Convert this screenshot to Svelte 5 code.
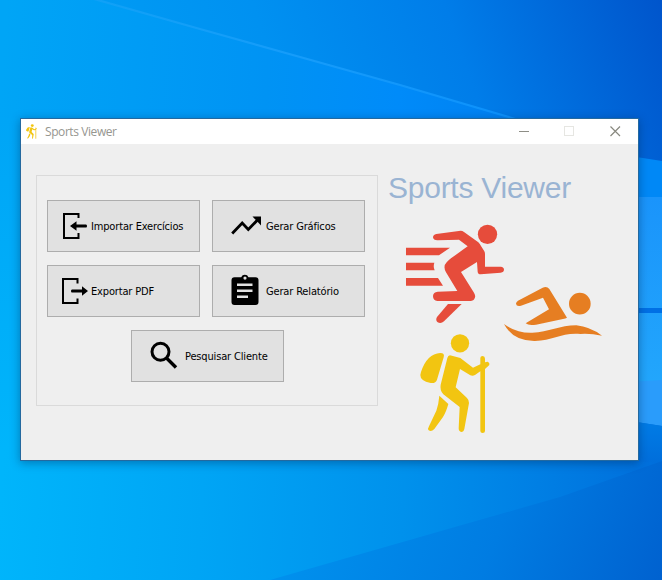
<script>
  const title = 'Sports Viewer';
  const rows = [
    [
      { icon: 'import', label: 'Importar Exercícios' },
      { icon: 'chart', label: 'Gerar Gráficos' }
    ],
    [
      { icon: 'export', label: 'Exportar PDF' },
      { icon: 'report', label: 'Gerar Relatório' }
    ],
    [{ icon: 'search', label: 'Pesquisar Cliente' }]
  ];
</script>

<div class="desktop">
  <svg class="wallpaper" viewBox="0 0 662 580" preserveAspectRatio="none" aria-hidden="true">
    <defs>
      <linearGradient id="base" gradientUnits="userSpaceOnUse" x1="0" y1="500" x2="670" y2="540">
        <stop offset="0" stop-color="#00b5fb" />
        <stop offset=".3" stop-color="#00a5f5" />
        <stop offset=".6" stop-color="#0091ec" />
        <stop offset=".8" stop-color="#007fe4" />
        <stop offset="1" stop-color="#006cda" />
      </linearGradient>
      <linearGradient id="sky" gradientUnits="userSpaceOnUse" x1="90" y1="180" x2="660" y2="-20">
        <stop offset="0" stop-color="#009ff5" />
        <stop offset=".35" stop-color="#0091f1" />
        <stop offset=".65" stop-color="#007de9" />
        <stop offset="1" stop-color="#0054cb" />
      </linearGradient>
      <linearGradient id="beam" gradientUnits="userSpaceOnUse" x1="0" y1="100" x2="662" y2="140">
        <stop offset="0" stop-color="#00a5f6" />
        <stop offset=".4" stop-color="#0093f4" />
        <stop offset=".6" stop-color="#008bf9" />
        <stop offset="1" stop-color="#0070e6" />
      </linearGradient>
      <linearGradient id="leftEdge" x1="0" y1="0" x2="0" y2="1">
        <stop offset="0" stop-color="#00a5f6" />
        <stop offset="1" stop-color="#00b5fb" />
      </linearGradient>
      <linearGradient id="line" gradientUnits="userSpaceOnUse" x1="90" y1="0" x2="520" y2="130">
        <stop offset="0" stop-color="#1aa5f8" stop-opacity=".6" />
        <stop offset=".5" stop-color="#169cfa" />
        <stop offset="1" stop-color="#0c90fc" />
      </linearGradient>
      <linearGradient id="floor" gradientUnits="userSpaceOnUse" x1="330" y1="450" x2="680" y2="580">
        <stop offset="0" stop-color="#0090ed" />
        <stop offset=".5" stop-color="#007ce2" />
        <stop offset="1" stop-color="#005fce" />
      </linearGradient>
      <linearGradient id="pane" x1="0" y1="0" x2="0" y2="1">
        <stop offset="0" stop-color="#1a94fb" />
        <stop offset="1" stop-color="#22a6fc" />
      </linearGradient>
      <linearGradient id="lowEdge" x1="0" y1="0" x2="0" y2="1">
        <stop offset="0" stop-color="#007ce6" />
        <stop offset="1" stop-color="#006edb" />
      </linearGradient>
    </defs>
    <rect width="662" height="580" fill="url(#base)" />
    <path d="M0 0H662V200H0Z" fill="url(#beam)" />
    <path d="M94 0H662V170L638 160L522 121L300 56Z" fill="url(#sky)" />
    <path d="M0 118H24V450H0Z" fill="url(#leftEdge)" />
    <path d="M94 -1L200 29L300 57L400 85L522 121" fill="none" stroke="url(#line)" stroke-width="2.2" />
    <path d="M630 156L662 161V203H630Z" fill="#0088f6" />
    <path d="M630 197H662V382H630Z" fill="url(#pane)" />
    <path d="M630 308H662V313H630Z" fill="#0070e5" />
    <path d="M630 382L662 380V426L630 421Z" fill="#2a9cfb" />
    <path d="M630 421L662 426V463L630 461Z" fill="url(#lowEdge)" />
    <path d="M270 580L560 497L662 461V580Z" fill="url(#floor)" />
  </svg>

  <section class="window">
    <header class="titlebar">
      <svg class="app-icon" viewBox="420 333 70 101" preserveAspectRatio="none"><use href="#hiker" /></svg>
      <span class="caption">{title}</span>
      <svg class="controls" viewBox="0 0 116 25">
        <path d="M3 12.5H13" stroke="#8e8e86" />
        <rect x="48.5" y="7.5" width="9" height="9" fill="none" stroke="#e6e6e2" />
        <path d="M94.5 7.5L104 17M104 7.5L94.5 17" stroke="#88887f" stroke-width="1.2" />
      </svg>
    </header>

    <div class="content">
      <div class="group">
        {#each rows as row}
          <div class="row">
            {#each row as item}
              <button class={item.icon}>
                <svg class="icon" viewBox="0 0 30 36">
                  {#if item.icon === 'import'}
                    <path d="M17.5 9V5H3V29H17.5V24" fill="none" stroke="#000" stroke-width="2" />
                    <path d="M9 17L15.5 12.2V15.4H25Q26 15.4 26 17T25 18.6H15.5V21.8Z" />
                  {:else if item.icon === 'export'}
                    <path d="M16.5 9.5V5H2V29H16.5V24.5" fill="none" stroke="#000" stroke-width="2" />
                    <path d="M27 17L21 12.2V15.4H11Q10 15.4 10 17T11 18.6H21V21.8Z" />
                  {:else if item.icon === 'chart'}
                    <path d="M1.2 24.5L11.2 14L17.3 20.5L27 10.5" fill="none" stroke="#000" stroke-width="2.8" />
                    <path d="M21.5 7.5H30V16.5Z" />
                  {:else if item.icon === 'report'}
                    <path fill-rule="evenodd" d="M3.5 3.2H10.2A4 4.2 0 0 1 17.5 3.2H24.5A3 3 0 0 1 27.5 6.2V28A3 3 0 0 1 24.5 31H3.5A3 3 0 0 1 .5 28V6.2A3 3 0 0 1 3.5 3.2ZM14 2.5A1.6 1.6 0 1 0 14 5.7A1.6 1.6 0 1 0 14 2.5ZM6 9.5V12H21.5V9.5ZM6 15.5V18H21.5V15.5ZM6 21.5V24H17V21.5Z" />
                  {:else}
                    <circle cx="10.5" cy="12.8" r="8.5" fill="none" stroke="#000" stroke-width="3" />
                    <path d="M16.5 19L26 28.5" stroke="#000" stroke-width="3.4" />
                  {/if}
                </svg>
                <span>{item.label}</span>
              </button>
            {/each}
          </div>
        {/each}
      </div>

      <aside class="brand">
        <h1>{title}</h1>
        <svg class="sports" viewBox="388 205 230 235">
          <g fill="#e64c3b" transform="translate(395 215) scale(.33333)">
            <circle cx="277.5" cy="58" r="29" />
            <path d="M124 57L197 47Q202 47 207 51L250 82Q255 87 258 93L268 109Q270 112 270 117V155H317Q327 156 327 164Q327 171 317 173L257 178Q249 178 248 170L246 141L198 171L237 233Q243 243 239 250Q236 258 226 258H127Q114 256 114 243Q115 231 128 230L187 228L153 172Q143 154 155 142Q160 136 168 130L218 94L192 74L127 76Q115 76 114 67Q114 59 124 57Z" />
            <path d="M33 98H165L132 121H33ZM33 143H118Q114 155 119 166H33ZM33 189H129L144 212H33Z" />
            <path d="M159 267H200L147 319Q137 328 127 321Q121 315 126 306Z" />
          </g>
          <g fill="#e67e22" transform="translate(495 280) scale(.33333)">
            <circle cx="254.5" cy="71" r="32.5" />
            <path d="M69 62L143 23Q156 18 163 27L216 113Q212 116 204 117L123 134Q101 138 92 130L162 88L144 53L78 77Q64 80 63 71Q63 66 69 62Z" />
            <path d="M27 132Q65 160 112 158C161 157 195 136 244 136Q285 140 321 167Q287 160 256 162C201 157 174 182 120 183Q54 184 27 132Z" />
          </g>
          <g id="hiker" fill="#f2c511" transform="translate(410 325) scale(.33333)">
            <circle cx="150" cy="55" r="27.5" />
            <path d="M91 84Q105 84 101 97L81 164Q77 176 62 174L48 170Q25 161 33 141Q51 86 91 84Z" />
            <path d="M120 91L151 99L189 128L211 118V99Q211 93 218 93Q225 94 225 101V112L233 110Q240 113 238 120L225 132V318Q225 324 218 324Q211 324 211 318V139L195 150Q188 154 181 151L150 132L137 187L171 219Q178 226 177 234L163 312Q161 321 154 321Q146 320 146 310L149 246L100 208Q89 196 92 179L112 99Q114 92 120 91Z" />
            <path d="M88 212L115 237Q108 262 99 276L73 312Q64 321 56 316Q52 312 57 304L79 257Q86 237 88 212Z" />
          </g>
        </svg>
      </aside>
    </div>
  </section>
</div>

<style>
  :global(body) {
    margin: 0;
    overflow: hidden;
  }
  .desktop {
    position: relative;
    width: 662px;
    height: 580px;
    box-sizing: border-box;
    padding: 118px 0 0 20px;
  }
  .wallpaper {
    position: absolute;
    inset: 0;
    width: 662px;
    height: 580px;
  }
  .window {
    position: relative;
    box-sizing: border-box;
    width: 619px;
    height: 343px;
    border: 1px solid #24699f;
    background: #efefef;
    box-shadow: 0 2px 9px rgba(0, 35, 80, .4);
  }
  .titlebar {
    display: flex;
    align-items: center;
    height: 25px;
    background: #fff;
  }
  .app-icon {
    width: 11px;
    height: 15px;
    margin: 0 8px 0 5px;
  }
  .caption {
    flex: 1;
    font: 12px/25px "Open Sans", "Noto Sans", sans-serif;
    letter-spacing: -.42px;
    color: #969690;
  }
  .controls {
    width: 116px;
    height: 25px;
    margin-right: 6px;
  }
  .content {
    display: flex;
    gap: 10px;
    padding: 31px 0 0 15px;
  }
  .group {
    box-sizing: border-box;
    width: 342px;
    height: 231px;
    padding: 24px 12px 0 10px;
    border: 1px solid #dadada;
    display: flex;
    flex-direction: column;
    gap: 13px;
  }
  .row {
    display: flex;
    gap: 12px;
  }
  .row:last-child {
    padding-left: 84px;
  }
  button {
    display: flex;
    align-items: center;
    box-sizing: border-box;
    width: 153px;
    height: 52px;
    margin: 0;
    padding: 2px 0 0 18px;
    border: 1px solid #adadad;
    background: #e1e1e1;
    color: #000;
    font: 11px/14px "DejaVu Sans Condensed", "DejaVu Sans", sans-serif;
    font-stretch: condensed;
    letter-spacing: -.16px;
    white-space: nowrap;
  }
  .icon {
    flex: none;
    width: 30px;
    height: 36px;
    margin-right: 5px;
  }
  .import,
  .export {
    padding-left: 13px;
  }
  .import .icon,
  .export .icon {
    margin-right: 0;
  }
  h1 {
    margin: 0;
    height: 30px;
    font: 30px/26px "Liberation Sans", Arial, sans-serif;
    letter-spacing: -.25px;
    color: #9ab4d3;
  }
  .sports {
    display: block;
    width: 230px;
    height: 235px;
  }
</style>
